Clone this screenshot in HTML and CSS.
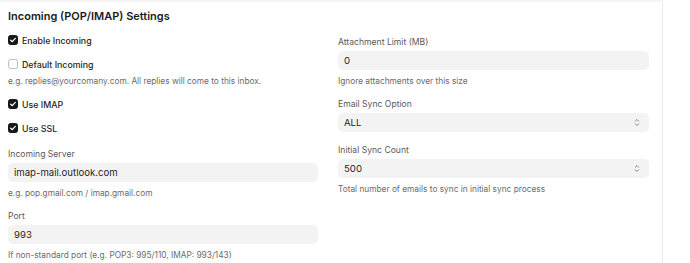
FILE: index.html
```html
<!DOCTYPE html>
<html>
<head>
<meta charset="utf-8">
<link rel="stylesheet" href="styles.css">
</head>
<body>
<div class="page">
  <h2 class="title">Incoming (POP/IMAP) Settings</h2>
  <div class="grid">
    <div class="col">
      <label class="check">
        <span class="box on"><svg viewBox="0 0 10 10" width="10" height="10"><path d="M2.7 5.2 L4.3 6.7 L7.3 3.4" fill="none" stroke="#fff" stroke-width="1.25" stroke-linecap="round" stroke-linejoin="round"/></svg></span>
        <span class="check-text">Enable Incoming</span>
      </label>
      <label class="check">
        <span class="box"></span>
        <span class="check-text">Default Incoming</span>
      </label>
      <p class="help help-check">e.g. replies@yourcomany.com. All replies will come to this inbox.</p>
      <label class="check">
        <span class="box on"><svg viewBox="0 0 10 10" width="10" height="10"><path d="M2.7 5.2 L4.3 6.7 L7.3 3.4" fill="none" stroke="#fff" stroke-width="1.25" stroke-linecap="round" stroke-linejoin="round"/></svg></span>
        <span class="check-text">Use IMAP</span>
      </label>
      <label class="check">
        <span class="box on"><svg viewBox="0 0 10 10" width="10" height="10"><path d="M2.7 5.2 L4.3 6.7 L7.3 3.4" fill="none" stroke="#fff" stroke-width="1.25" stroke-linecap="round" stroke-linejoin="round"/></svg></span>
        <span class="check-text">Use SSL</span>
      </label>
      <div class="field first-left">
        <div class="label">Incoming Server</div>
        <div class="input">imap-mail.outlook.com</div>
        <p class="help">e.g. pop.gmail.com / imap.gmail.com</p>
      </div>
      <div class="field">
        <div class="label">Port</div>
        <div class="input">993</div>
        <p class="help">If non-standard port (e.g. POP3: 995/110, IMAP: 993/143)</p>
      </div>
    </div>
    <div class="col right">
      <div class="field">
        <div class="label">Attachment Limit (MB)</div>
        <div class="input">0</div>
        <p class="help">Ignore attachments over this size</p>
      </div>
      <div class="field">
        <div class="label">Email Sync Option</div>
        <div class="input select">ALL<svg class="arrows" viewBox="0 0 6 9" width="6" height="9"><path d="M1.3 3.2 L3 1.5 L4.7 3.2 M1.3 5.8 L3 7.5 L4.7 5.8" fill="none" stroke="#7a7a7a" stroke-width="0.9" stroke-linecap="round" stroke-linejoin="round"/></svg></div>
      </div>
      <div class="field">
        <div class="label">Initial Sync Count</div>
        <div class="input select">500<svg class="arrows" viewBox="0 0 6 9" width="6" height="9"><path d="M1.3 3.2 L3 1.5 L4.7 3.2 M1.3 5.8 L3 7.5 L4.7 5.8" fill="none" stroke="#7a7a7a" stroke-width="0.9" stroke-linecap="round" stroke-linejoin="round"/></svg></div>
        <p class="help">Total number of emails to sync in initial sync process</p>
      </div>
    </div>
  </div>
</div>
</body>
</html>
```
FILE: styles.css
```css
html, body {
  margin: 0;
  padding: 0;
  background: #fff;
}
body {
  font-family: Inter, "Noto Sans", sans-serif;
  color: #171717;
}
.page {
  width: 654px;
  height: 261px;
  padding: 6px 0 0 8px;
  border-top: 2px solid #f5f5f5;
  border-right: 1px solid #ececec;
  box-sizing: content-box;
}
.title {
  margin: 0;
  font-size: 11px;
  line-height: 16px;
  font-weight: 600;
  color: #1c1c1c;
}
.grid {
  display: grid;
  grid-template-columns: 310px 311px;
  column-gap: 20px;
  margin-top: 9px;
}
.col {
  display: flex;
  flex-direction: column;
}
.check {
  display: flex;
  align-items: center;
  height: 14px;
  gap: 4px;
  margin-bottom: 10px;
}
.box {
  width: 10px;
  height: 10px;
  box-sizing: border-box;
  border: 1px solid #bdbdbd;
  border-radius: 2.5px;
  background: #fff;
  display: flex;
}
.box.on {
  background: #171717;
  border-color: #171717;
}
.box svg {
  margin: -1px;
}
.check-text {
  font-size: 8.8px;
  font-weight: 500;
  color: #262626;
}
.help {
  margin: 0;
  font-size: 8.3px;
  line-height: 12px;
  color: #6b6b6b;
}
.help-check {
  margin-top: -6px;
  margin-bottom: 10px;
}
.first-left {
  margin-top: 3px;
}
.field {
  display: flex;
  flex-direction: column;
  margin-bottom: 11px;
}
.right .field:first-child {
  margin-top: 3px;
}
.label {
  font-size: 8.6px;
  line-height: 12px;
  color: #595959;
  margin-bottom: 3px;
}
.input {
  height: 19px;
  background: #f3f3f3;
  border-radius: 5px;
  padding: 0 6px;
  font-size: 9.6px;
  line-height: 19px;
  color: #262626;
  margin-bottom: 5px;
}
.select {
  display: flex;
  align-items: center;
  justify-content: space-between;
  padding-right: 9px;
}
.arrows {
  display: block;
}
.right .field:nth-child(2) {
  margin-bottom: 7px;
}
```
